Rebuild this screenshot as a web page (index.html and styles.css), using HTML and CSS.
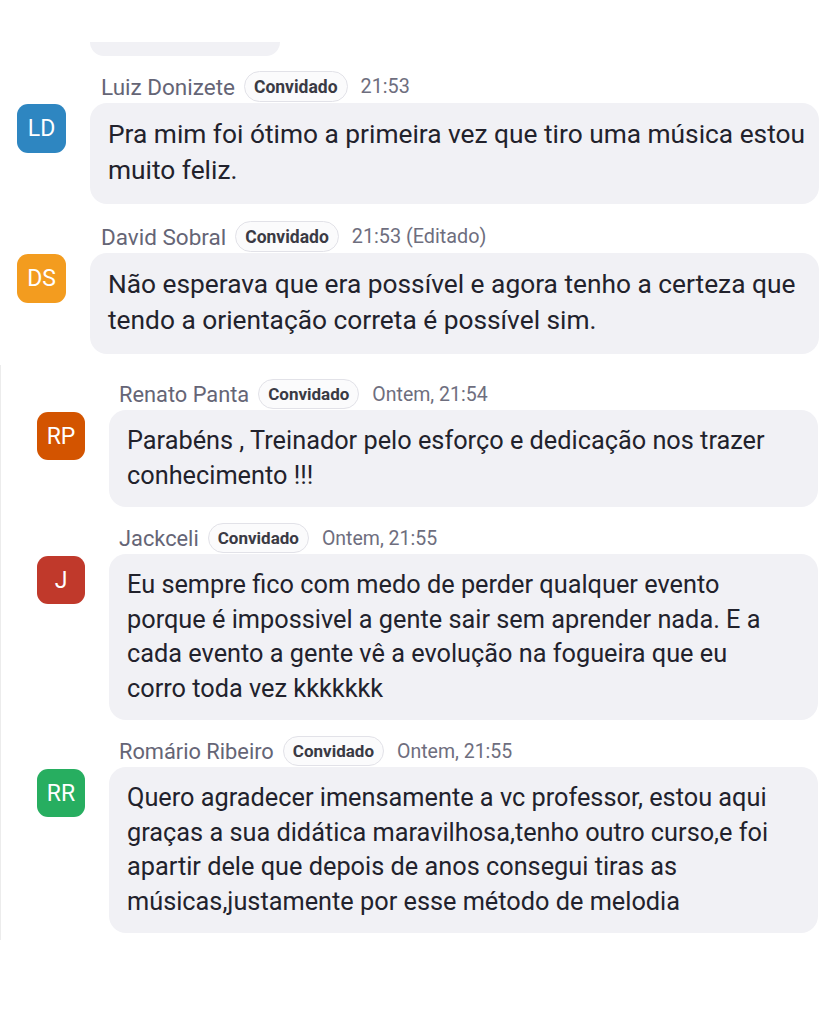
FILE: index.html
```html
<!DOCTYPE html>
<html lang="pt-BR">
<head>
<meta charset="utf-8">
<title>Chat</title>
<link rel="stylesheet" href="styles.css">
</head>
<body>
<div class="top">
  <div class="prev-bubble"></div>

  <div class="msg">
    <div class="head"><span class="name">Luiz Donizete</span><span class="badge">Convidado</span><span class="time">21:53</span></div>
    <div class="row">
      <div class="avatar c-blue">LD</div>
      <div class="bubble">Pra mim foi ótimo a primeira vez que tiro uma música estou<br>muito feliz.</div>
    </div>
  </div>

  <div class="msg">
    <div class="head"><span class="name">David Sobral</span><span class="badge">Convidado</span><span class="time">21:53 (Editado)</span></div>
    <div class="row">
      <div class="avatar c-yellow">DS</div>
      <div class="bubble">Não esperava que era possível e agora tenho a certeza que<br>tendo a orientação correta é possível sim.</div>
    </div>
  </div>
</div>

<div class="bottom">
  <div class="msg">
    <div class="head"><span class="name">Renato Panta</span><span class="badge">Convidado</span><span class="time">Ontem, 21:54</span></div>
    <div class="row">
      <div class="avatar c-orange">RP</div>
      <div class="bubble">Parabéns , Treinador pelo esforço e dedicação nos trazer<br>conhecimento !!!</div>
    </div>
  </div>

  <div class="msg">
    <div class="head"><span class="name">Jackceli</span><span class="badge">Convidado</span><span class="time">Ontem, 21:55</span></div>
    <div class="row">
      <div class="avatar c-red">J</div>
      <div class="bubble">Eu sempre fico com medo de perder qualquer evento<br>porque é impossivel a gente sair sem aprender nada. E a<br>cada evento a gente vê a evolução na fogueira que eu<br>corro toda vez kkkkkkk</div>
    </div>
  </div>

  <div class="msg">
    <div class="head"><span class="name">Romário Ribeiro</span><span class="badge">Convidado</span><span class="time">Ontem, 21:55</span></div>
    <div class="row">
      <div class="avatar c-green">RR</div>
      <div class="bubble">Quero agradecer imensamente a vc professor, estou aqui<br>graças a sua didática maravilhosa,tenho outro curso,e foi<br>apartir dele que depois de anos consegui tiras as<br>músicas,justamente por esse método de melodia</div>
    </div>
  </div>
</div>
</body>
</html>
```

FILE: styles.css
```css
* { box-sizing: border-box; }

html, body {
  margin: 0;
  padding: 0;
  background: #ffffff;
}

body {
  width: 819px;
  height: 1024px;
  overflow: hidden;
  font-family: Roboto, "Open Sans", "Liberation Sans", sans-serif;
  color: #22222c;
}

.top {
  padding-left: 17px;
  padding-top: 42px;
}

.prev-bubble {
  margin-left: 73px;
  width: 190px;
  height: 14px;
  background: #f1f1f5;
  border-radius: 0 0 16px 16px;
  margin-bottom: 15px;
}

.bottom {
  margin-top: 11px;
  padding-top: 14px;
  padding-left: 36px;
  border-left: 1px solid #ececec;
  height: 575px;
}

.msg {
  display: flex;
  flex-direction: column;
  margin-bottom: 17px;
}

.top .msg:last-child { margin-bottom: 0; }

.head {
  display: flex;
  align-items: center;
  height: 31px;
  padding-left: 84px;
  margin-bottom: 1px;
  white-space: nowrap;
}

.name {
  font-size: 22.5px;
  color: #656576;
}

.badge {
  margin-left: 9px;
  height: 31px;
  padding: 0 9px;
  display: inline-flex;
  align-items: center;
  border: 1px solid #e2e2e8;
  border-radius: 16px;
  background: #fbfbfc;
  font-size: 17.5px;
  font-weight: 700;
  color: #3a3a44;
}

.time {
  margin-left: 13px;
  font-size: 19.8px;
  color: #6e6e7e;
}

.row {
  display: flex;
  align-items: flex-start;
  gap: 24px;
}

.avatar {
  flex: none;
  width: 49px;
  height: 49px;
  margin-top: 1px;
  border-radius: 11px;
  display: flex;
  align-items: center;
  justify-content: center;
  color: #ffffff;
  font-size: 23px;
}

.c-blue { background: #2e86c1; }
.c-yellow { background: #f39c1f; }
.c-orange { background: #d35400; }
.c-red { background: #c0392b; }
.c-green { background: #27ae60; }

.bubble {
  flex: 1;
  background: #f1f1f5;
  border-radius: 17px;
  padding: 13px 8px 16px 18px;
  font-size: 26.3px;
  line-height: 36px;
  white-space: nowrap;
}

.bottom .msg { margin-bottom: 16px; }
.bottom .head { padding-left: 82px; height: 30px; }
.bottom .badge { height: 30px; font-size: 17px; }
.bottom .avatar { width: 48px; height: 48px; margin-top: 2px; }
.bottom .name { font-size: 21.8px; }
.bottom .time { font-size: 19.5px; }
.bottom .bubble {
  margin-right: 1px;
  font-size: 25.3px;
  line-height: 34.5px;
  padding: 14px 8px 14px 18px;
}
```
